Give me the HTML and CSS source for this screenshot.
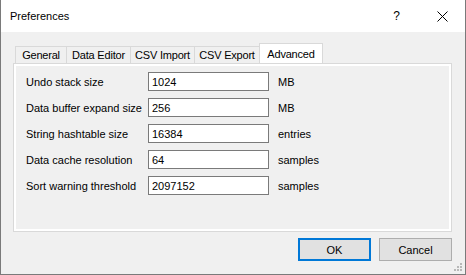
FILE: index.html
```html
<!DOCTYPE html>
<html lang="en">
<head>
    <meta charset="UTF-8">
    <title>Preferences</title>
    <link rel="stylesheet" href="styles.css">
</head>
<body>
    <div class="window">
        <div class="titlebar">
            <span class="title">Preferences</span>
            <span class="caption-btn help">?</span>
            <span class="caption-btn close">
                <svg width="11" height="11" viewBox="0 0 11 11">
                    <path d="M0.5 0.5 L10.5 10.5 M10.5 0.5 L0.5 10.5" stroke="#000" stroke-width="1" fill="none"/>
                </svg>
            </span>
        </div>

        <div class="content">
            <div class="tabs">
                <div class="tab tab-general">General</div>
                <div class="tab tab-editor">Data Editor</div>
                <div class="tab tab-import">CSV Import</div>
                <div class="tab tab-export">CSV Export</div>
                <div class="tab tab-advanced active">Advanced</div>
            </div>

            <div class="panel">
                <div class="row">
                    <label class="label">Undo stack size</label>
                    <input class="field" type="text" value="1024">
                    <span class="unit">MB</span>
                </div>
                <div class="row">
                    <label class="label">Data buffer expand size</label>
                    <input class="field" type="text" value="256">
                    <span class="unit">MB</span>
                </div>
                <div class="row">
                    <label class="label">String hashtable size</label>
                    <input class="field" type="text" value="16384">
                    <span class="unit">entries</span>
                </div>
                <div class="row">
                    <label class="label">Data cache resolution</label>
                    <input class="field" type="text" value="64">
                    <span class="unit">samples</span>
                </div>
                <div class="row">
                    <label class="label">Sort warning threshold</label>
                    <input class="field" type="text" value="2097152">
                    <span class="unit">samples</span>
                </div>
            </div>

            <div class="buttons">
                <button class="btn default">OK</button>
                <button class="btn">Cancel</button>
            </div>
        </div>

        <!-- size grip in the corner -->
        <svg class="grip" width="9" height="9" viewBox="0 0 9 9">
            <rect x="6" y="0" width="2" height="2" fill="#b8b8b8"/>
            <rect x="3" y="3" width="2" height="2" fill="#b8b8b8"/>
            <rect x="6" y="3" width="2" height="2" fill="#b8b8b8"/>
            <rect x="0" y="6" width="2" height="2" fill="#b8b8b8"/>
            <rect x="3" y="6" width="2" height="2" fill="#b8b8b8"/>
            <rect x="6" y="6" width="2" height="2" fill="#b8b8b8"/>
        </svg>
    </div>
</body>
</html>
```

FILE: styles.css
```css
body {
    margin: 0;
    padding: 0;
    font-family: 'Liberation Sans', Arial, sans-serif;
    font-size: 11px;
    color: #000;
    background-color: #f0f0f0;
}
.window {
    position: relative;
    width: 466px;
    height: 275px;
    box-sizing: border-box;
    border: 1px solid #7a7a7a;
    border-top: none;
    background-color: #f0f0f0;
    display: flex;
    flex-direction: column;
}
.titlebar {
    height: 32px;
    background-color: #fff;
    display: flex;
    align-items: center;
}
.title {
    flex: 1;
    padding-left: 9px;
    font-size: 11px;
}
.caption-btn {
    width: 45px;
    height: 32px;
    display: flex;
    align-items: center;
    justify-content: center;
}
.help {
    font-size: 12px;
}
.close {
    width: 46px;
}
.content {
    padding: 11px 13px 0 12px;
}
.tabs {
    display: flex;
    align-items: flex-end;
    height: 20px;
    padding-left: 2px;
}
.tab {
    height: 17px;
    box-sizing: border-box;
    border: 1px solid #d9d9d9;
    border-bottom: none;
    margin-right: -1px;
    display: flex;
    align-items: center;
    justify-content: center;
    white-space: nowrap;
    letter-spacing: -0.2px;
    background-color: #f0f0f0;
}
.tab-general { width: 52px; }
.tab-editor { width: 65px; }
.tab-import { width: 65px; }
.tab-export { width: 66px; }
.tab-advanced { width: 64px; }
.tab.active {
    height: 20px;
    background-color: #fff;
    position: relative;
    z-index: 1;
}
.panel {
    height: 169px;
    box-sizing: border-box;
    border: 1px solid #d9d9d9;
    box-shadow: inset 0 0 0 2px #fff;
    padding: 8px 12px 0 12px;
}
.row {
    display: flex;
    align-items: center;
    height: 19px;
    margin-bottom: 7px;
}
.label {
    width: 122px;
}
.field {
    width: 121px;
    height: 19px;
    box-sizing: border-box;
    margin: 0;
    padding: 0 3px;
    border: 1px solid #7a7a7a;
    background-color: #fff;
    font-family: inherit;
    font-size: 11px;
    color: #000;
    outline: none;
}
.unit {
    margin-left: 9px;
}
.buttons {
    display: flex;
    justify-content: flex-end;
    gap: 8px;
    margin-top: 6px;
}
.btn {
    width: 73px;
    height: 23px;
    box-sizing: border-box;
    margin: 0;
    padding: 0;
    border: 1px solid #adadad;
    background-color: #e1e1e1;
    font-family: inherit;
    font-size: 11px;
    color: #000;
}
.btn.default {
    border: 2px solid #0078d7;
}
.grip {
    position: absolute;
    right: 2px;
    bottom: 2px;
}
```
